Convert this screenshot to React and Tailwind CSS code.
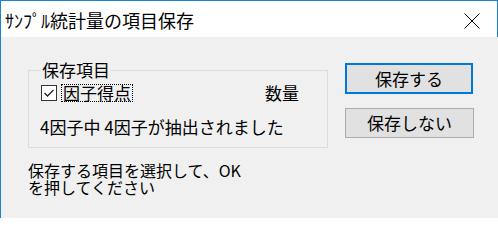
import React from 'react'

const font = { fontFamily: '"Noto Sans CJK JP", "Noto Sans", sans-serif' }

const CloseIcon = () => (
  <svg width="16" height="16" viewBox="0 0 16 16" className="block">
    <path d="M0.5 0.5 L15.5 15.5 M15.5 0.5 L0.5 15.5" stroke="#000" strokeWidth="1" fill="none" />
  </svg>
)

const CheckBox = () => (
  <span className="flex h-[16px] w-[16px] items-center justify-center border border-[#333333] bg-white">
    <svg width="14" height="14" viewBox="0 0 14 14" className="block">
      <path d="M2.5 7 L5.5 10 L11.5 4" stroke="#222" strokeWidth="1.3" fill="none" />
    </svg>
  </span>
)

const App = () => {
  return (
    <div
      className="h-[218px] w-[498px] overflow-hidden border-l border-[#1883d7] bg-[#f0f0f0] text-black"
      style={font}
    >
      {/* title bar */}
      <div className="flex h-[37px] items-start justify-between border-t border-r border-[#1883d7] bg-white pl-[4px] pr-[17px]">
        <span className="mt-[10px] text-[18px] leading-[18px]">ｻﾝﾌﾟﾙ統計量の項目保存</span>
        <span className="mt-[12px]">
          <CloseIcon />
        </span>
      </div>

      <div className="flex pl-[27px] pt-[24px]">
        <div className="w-[300px]">
          <fieldset className="border border-[#dcdcdc] px-0 pb-[11px]">
            <legend className="ml-[12px] px-[1px] text-[17px] leading-[18px]">保存項目</legend>
            <div className="pl-[12px] pr-[28px]">
              <div className="mt-[5px] flex h-[17px] items-center text-[17px] leading-[17px]">
                <CheckBox />
                <span className="ml-[4px] border border-dotted border-black px-[1px] leading-[16px]">因子得点</span>
                <span className="ml-auto">数量</span>
              </div>
              <div className="mt-[17px] -ml-[1px] text-[17px] leading-[18px]">4因子中 4因子が抽出されました</div>
            </div>
          </fieldset>
          <p className="mt-[14px] text-[16px] leading-[17px]">
            保存する項目を選択して、OK
            <br />
            を押してください
          </p>
        </div>

        <div className="ml-[17px] mt-[2px] flex flex-col">
          <button className="flex h-[31px] w-[128px] items-center justify-center border-2 border-[#0078d7] bg-[#e1e1e1] text-[17px] leading-[18px]">
            保存する
          </button>
          <button className="mt-[14px] flex h-[30px] w-[129px] items-center justify-center border border-[#adadad] bg-[#e1e1e1] text-[17px] leading-[18px]">
            保存しない
          </button>
        </div>
      </div>
    </div>
  )
}

export default App
